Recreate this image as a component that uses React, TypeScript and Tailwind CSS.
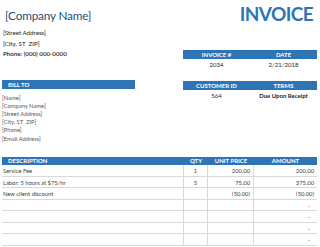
export default function App() {
  const rows = [
    { desc: "Service Fee", qty: "1", price: "200.00", amount: "200.00" },
    { desc: "Labor: 5 hours at $75/hr", qty: "5", price: "75.00", amount: "375.00" },
    { desc: "New client discount", qty: "", price: "(50.00)", amount: "(50.00)" },
    { desc: "", qty: "", price: "", amount: "-" },
    { desc: "", qty: "", price: "", amount: "-" },
    { desc: "", qty: "", price: "", amount: "-" },
    { desc: "", qty: "", price: "", amount: "-" },
  ];

  const billTo = ["[Name]", "[Company Name]", "[Street Address]", "[City, ST  ZIP]", "[Phone]", "[Email Address]"];

  return (
    <div className="w-[320px] h-[247px] overflow-hidden bg-white font-['Lato',sans-serif] pl-[2px]">
      <div className="flex h-[157px]">
        {/* left column */}
        <div className="w-[181px]">
          <div className="pt-[8px] pl-[3px] text-[11.8px] leading-[16px] tracking-[-0.2px] text-[#1f4e79]">[Company Name]</div>
          <div className="mt-[4px] pl-[1px] text-[6.2px] leading-[10.5px] text-[#1a1a1a]">
            <div>[Street Address]</div>
            <div>[City, ST&nbsp; ZIP]</div>
            <div className="font-semibold">Phone: (000) 000-0000</div>
          </div>
          <div className="mt-[20.5px] w-[133px] h-[9px] bg-[#2e75b6] pl-[6px] text-[6px] leading-[9px] font-bold text-white">
            BILL TO
          </div>
          <div className="mt-[4.6px] text-[5.8px] leading-[8.2px] text-[#595959]">
            {billTo.map((b) => (
              <div key={b} className="whitespace-pre">{b}</div>
            ))}
          </div>
        </div>

        {/* right column */}
        <div className="w-[134px]">
          <div className="pt-[4px] pr-[4px] text-right text-[19px] leading-[20px] tracking-[-0.6px] font-bold text-[#2e75b6]">INVOICE</div>
          <div className="mt-[26px] grid grid-cols-2 h-[9px] bg-[#2e75b6] text-center text-[6px] leading-[9px] font-bold text-white">
            <div>INVOICE #</div>
            <div>DATE</div>
          </div>
          <div className="grid grid-cols-2 h-[11px] text-center text-[6px] leading-[11px] text-[#262626]">
            <div>2034</div>
            <div>2/21/2018</div>
          </div>
          <div className="mt-[11px] grid grid-cols-2 h-[9px] bg-[#2e75b6] text-center text-[6px] leading-[9px] font-bold text-white">
            <div>CUSTOMER ID</div>
            <div>TERMS</div>
          </div>
          <div className="grid grid-cols-2 h-[11px] text-center text-[6px] leading-[11px] text-[#262626]">
            <div>564</div>
            <div className="font-bold">Due Upon Receipt</div>
          </div>
        </div>
      </div>

      {/* items table */}
      <div className="w-[315px]">
        <div className="grid grid-cols-[182px_24px_46px_63px] h-[8px] bg-[#2e75b6] text-[6px] leading-[8px] font-bold text-white">
          <div className="pl-[6px]">DESCRIPTION</div>
          <div className="text-center">QTY</div>
          <div className="text-center">UNIT PRICE</div>
          <div className="text-center">AMOUNT</div>
        </div>
        {rows.map((r, i) => (
          <div
            key={i}
            className="grid grid-cols-[182px_24px_46px_63px] h-[11.5px] border-b border-[#d9d9d9] text-[5.8px] leading-[11px] text-[#404040]"
          >
            <div className="pl-[1px] border-r border-[#d9d9d9]">{r.desc}</div>
            <div className="text-center border-r border-[#d9d9d9]">{r.qty}</div>
            <div className="text-right pr-[3px] border-r border-[#d9d9d9]">{r.price}</div>
            <div className={r.amount === "-" ? "text-right pr-[7px]" : "text-right pr-[3px]"}>{r.amount}</div>
          </div>
        ))}
      </div>
    </div>
  );
}
